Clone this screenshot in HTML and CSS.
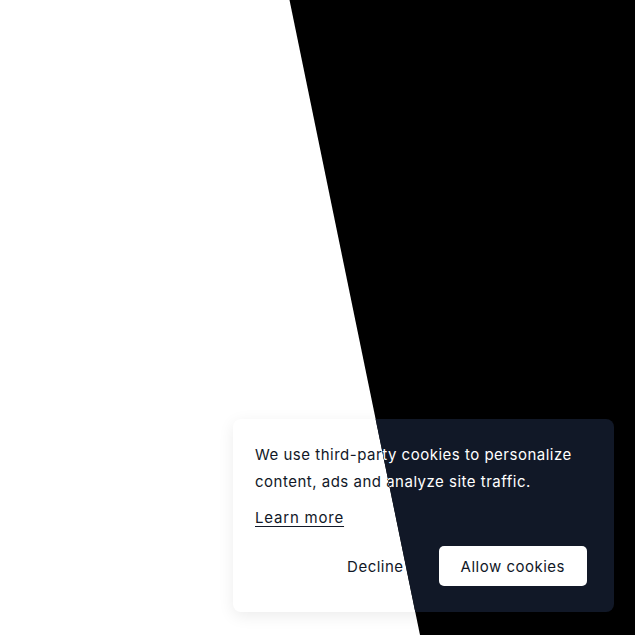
FILE: index.html
```html
<!DOCTYPE html>
<html lang="en">
<head>
<meta charset="utf-8">
<title>Cookie consent</title>
<link rel="stylesheet" href="styles.css">
</head>
<body>
  <div class="theme theme-light">
    <div class="cookie">
      <p class="cookie-text">We use third-party cookies to personalize content, ads and analyze site traffic.</p>
      <a class="cookie-link" href="#">Learn more</a>
      <div class="cookie-actions">
        <button class="btn btn-decline">Decline</button>
        <button class="btn btn-allow">Allow cookies</button>
      </div>
    </div>
  </div>
  <div class="theme theme-dark" aria-hidden="true">
    <div class="cookie">
      <p class="cookie-text">We use third-party cookies to personalize content, ads and analyze site traffic.</p>
      <a class="cookie-link" href="#">Learn more</a>
      <div class="cookie-actions">
        <button class="btn btn-decline">Decline</button>
        <button class="btn btn-allow">Allow cookies</button>
      </div>
    </div>
  </div>
</body>
</html>
```
FILE: styles.css
```css
html, body {
  margin: 0;
  padding: 0;
  height: 100%;
  overflow: hidden;
}
body {
  font-family: "Inter", "Noto Sans", sans-serif;
  background: #ffffff;
}
.theme {
  position: fixed;
  inset: 0;
}
.theme-light {
  background: #ffffff;
  color: #111827;
}
.theme-dark {
  background: #000000;
  color: #ffffff;
  clip-path: polygon(289.5px 0, 100% 0, 100% 100%, 420px 100%);
}
.cookie {
  position: absolute;
  right: 21px;
  bottom: 23px;
  width: 381px;
  box-sizing: border-box;
  padding: 22px 27px 26px 22px;
  border-radius: 8px;
  font-size: 15px;
  letter-spacing: 0.5px;
}
.theme-light .cookie {
  background: #ffffff;
  box-shadow: 0 4px 16px rgba(0, 0, 0, 0.08);
}
.theme-dark .cookie {
  background: #111827;
}
.cookie-text {
  margin: 0;
  line-height: 27px;
}
.cookie-link {
  display: inline-block;
  margin-top: 9px;
  line-height: 27px;
  letter-spacing: 0.8px;
  color: inherit;
  text-decoration: underline;
  text-decoration-thickness: 1px;
  text-underline-offset: 3px;
}
.cookie-actions {
  display: flex;
  justify-content: flex-end;
  align-items: center;
  gap: 19px;
  margin-top: 15px;
}
.btn {
  font: inherit;
  letter-spacing: inherit;
  border: none;
  cursor: pointer;
  height: 40px;
}
.btn-decline {
  background: transparent;
  color: inherit;
  padding: 0 16px;
}
.btn-allow {
  padding: 0 22px;
  border-radius: 5px;
}
.theme-light .btn-allow {
  background: #111827;
  color: #ffffff;
}
.theme-dark .btn-allow {
  background: #ffffff;
  color: #111827;
}
```
